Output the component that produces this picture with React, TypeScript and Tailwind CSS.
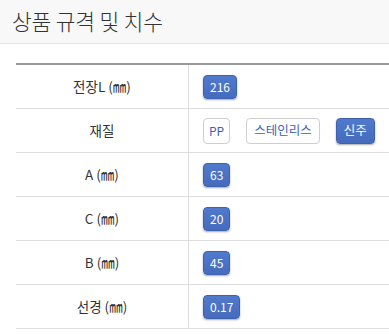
import React from 'react';

type Option = { label: string; active: boolean };

interface SpecRow {
  name: string;
  options: Option[];
}

const rows: SpecRow[] = [
  { name: '전장L (㎜)', options: [{ label: '216', active: true }] },
  {
    name: '재질',
    options: [
      { label: 'PP', active: false },
      { label: '스테인리스', active: false },
      { label: '신주', active: true },
    ],
  },
  { name: 'A (㎜)', options: [{ label: '63', active: true }] },
  { name: 'C (㎜)', options: [{ label: '20', active: true }] },
  { name: 'B (㎜)', options: [{ label: '45', active: true }] },
  { name: '선경 (㎜)', options: [{ label: '0.17', active: true }] },
];

const Badge: React.FC<{ option: Option; tall: boolean }> = ({ option, tall }) => {
  const hangul = /[가-힣]/.test(option.label);
  return (
    <span
      className={`inline-flex items-center rounded-[4px] leading-none ${tall ? 'h-[26px]' : 'h-[24px]'} ${
        hangul ? 'px-[7px] text-[12.5px]' : tall ? 'px-[5px] text-[12px]' : 'px-[6px] text-[12px]'
      } ${
        option.active
          ? 'bg-gradient-to-b from-[#5179cc] to-[#456bbd] border border-[#3f62ae] text-white shadow-[0_1px_2px_rgba(0,0,0,0.35)]'
          : 'bg-white border border-[#cfcfcf] text-[#3a62b8]'
      }`}
    >
      {option.label}
    </span>
  );
};

export default function App() {
  return (
    <div className="w-[389px] h-[334px] bg-white overflow-hidden" style={{ fontFamily: '"Noto Sans CJK KR", "Noto Sans", sans-serif' }}>
      {/* Section header */}
      <div className="h-[44px] bg-[#f8f8f8] border-b border-[#e6e6e6] flex items-center px-[12px]">
        <h2 className="text-[21.5px] font-light text-[#333] tracking-[-0.2px]">상품 규격 및 치수</h2>
      </div>

      {/* Spec table */}
      <div className="ml-[16px] mt-[19px] border-t-2 border-[#999]">
        {rows.map((row) => {
          const tall = row.options.length > 1;
          return (
            <div key={row.name} className="flex h-[44px] border-b border-[#dedede]">
              <div className="w-[173px] shrink-0 border-r border-[#dedede] flex items-center justify-center text-[13.5px] text-[#333]">
                {row.name}
              </div>
              <div className="flex items-center gap-[16px] pl-[14px]">
                {row.options.map((opt) => (
                  <Badge key={opt.label} option={opt} tall={tall} />
                ))}
              </div>
            </div>
          );
        })}
      </div>
    </div>
  );
}
